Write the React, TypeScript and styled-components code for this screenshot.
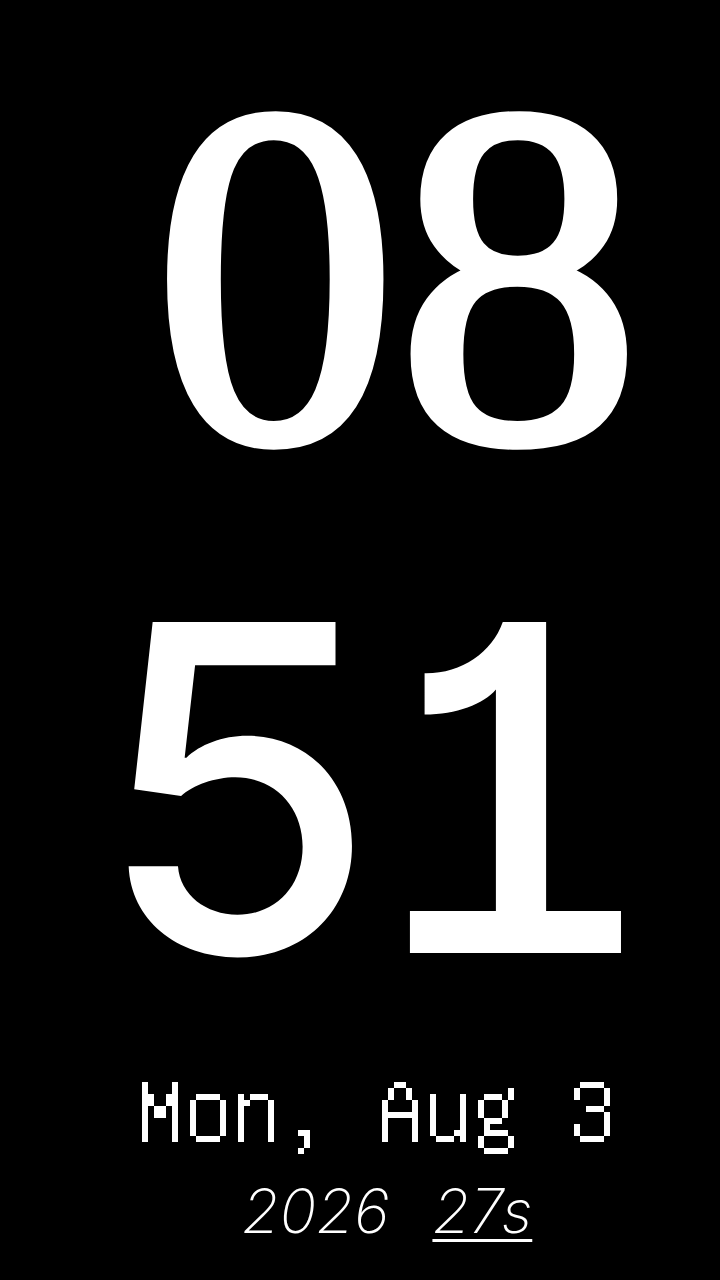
import styled, { createGlobalStyle } from 'styled-components'

const GlobalStyle = createGlobalStyle`
  html, body {
    margin: 0;
    padding: 0;
    background: #000;
  }
  #root {
    min-height: 1280px;
  }
`

const Screen = styled.main`
  width: 720px;
  height: 1280px;
  background: #000;
  color: #fff;
  display: flex;
  flex-direction: column;
  align-items: center;
  overflow: hidden;
`

const Hours = styled.div`
  font-family: 'Liberation Serif', 'Times New Roman', serif;
  font-size: 487px;
  line-height: 487px;
  -webkit-text-stroke: 10px #fff;
  margin-top: 32px;
  padding-left: 74px;
`

const Minutes = styled.div`
  font-family: Inter, 'Liberation Sans', sans-serif;
  font-feature-settings: 'cv01', 'tnum';
  font-weight: 500;
  font-size: 455px;
  line-height: 455px;
  letter-spacing: -24px;
  margin-top: 41px;
  padding-left: 7px;
`

const DateLine = styled.div`
  font-family: Unifont, 'DejaVu Sans Mono', monospace;
  font-size: 96px;
  line-height: 96px;
  margin-top: 43px;
  padding-left: 32px;
  white-space: pre;
`

const Meta = styled.div`
  display: flex;
  gap: 43px;
  font-family: Inter, Roboto, sans-serif;
  font-style: italic;
  font-weight: 200;
  font-size: 61px;
  line-height: 62px;
  margin-top: 26px;
  padding-left: 54px;
`

const Part = styled.span<{ underline?: boolean }>`
  text-decoration: ${props => (props.underline ? 'underline' : 'none')};
  text-decoration-thickness: 3px;
  text-underline-offset: 6px;
`

const App = () => {
  return (
    <Screen>
      <GlobalStyle />
      <Hours>08</Hours>
      <Minutes>51</Minutes>
      <DateLine>Mon, Aug 3</DateLine>
      <Meta>
        <Part>2026</Part>
        <Part underline>27s</Part>
      </Meta>
    </Screen>
  )
}

export default App
